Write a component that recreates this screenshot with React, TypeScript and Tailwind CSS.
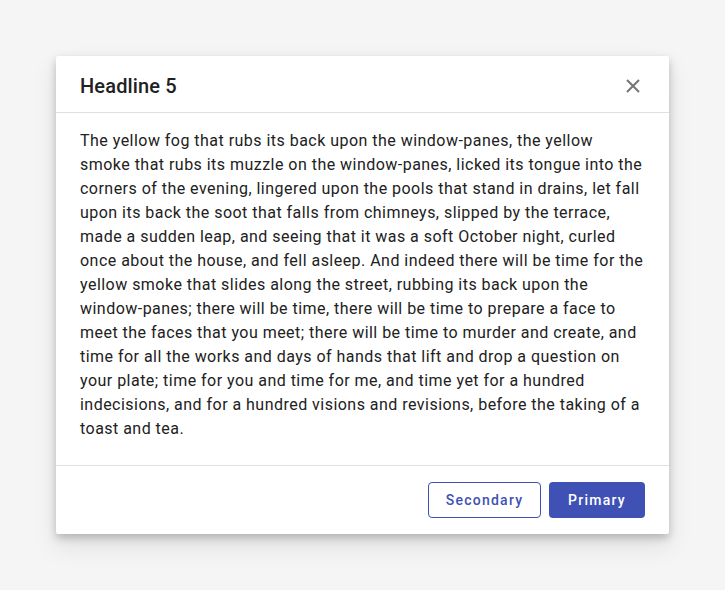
export default function App() {
  return (
    <div
      className="min-h-screen bg-[#f5f5f5] pt-14 pl-14"
      style={{ fontFamily: "Roboto, 'Liberation Sans', sans-serif" }}
    >
      <div className="w-[613px] bg-white rounded-[2px] shadow-[0_4px_8px_rgba(0,0,0,0.22),0_12px_24px_2px_rgba(0,0,0,0.08)]">
        {/* Header */}
        <div className="h-[57px] pl-6 pr-7 pt-1 flex items-center justify-between border-b border-[#e0e0e0]">
          <h2 className="text-[20px] font-medium text-[#212121] tracking-[0.15px]">Headline 5</h2>
          <button className="w-4 h-4 flex items-center justify-center text-[#757575]">
            <svg width="14" height="14" viewBox="0 0 14 14">
              <path d="M1 1L13 13M13 1L1 13" stroke="currentColor" strokeWidth="2" />
            </svg>
          </button>
        </div>

        {/* Body */}
        <div className="px-6 pt-4 pb-6 border-b border-[#e0e0e0]">
          <p className="text-[16px] leading-6 tracking-[0.47px] text-[#212121]">
            The yellow fog that rubs its back upon the window-panes, the yellow smoke that rubs its
            muzzle on the window-panes, licked its tongue into the corners of the evening, lingered
            upon the pools that stand in drains, let fall upon its back the soot that falls from
            chimneys, slipped by the terrace, made a sudden leap, and seeing that it was a soft
            October night, curled once about the house, and fell asleep. And indeed there will be
            time for the yellow smoke that slides along the street, rubbing its back upon the
            window-panes; there will be time, there will be time to prepare a face to meet the faces
            that you meet; there will be time to murder and create, and time for all the works and
            days of hands that lift and drop a question on your plate; time for you and time for me,
            and time yet for a hundred indecisions, and for a hundred visions and revisions, before
            the taking of a toast and tea.
          </p>
        </div>

        {/* Footer */}
        <div className="h-[68px] px-6 flex items-center justify-end gap-2">
          <button className="h-9 w-[113px] rounded border border-[#3f51b5] text-[#3f51b5] text-[14px] font-medium tracking-[1.25px] bg-white">
            Secondary
          </button>
          <button className="h-9 w-[96px] rounded bg-[#3f51b5] text-white text-[14px] font-medium tracking-[1.25px]">
            Primary
          </button>
        </div>
      </div>
    </div>
  );
}
